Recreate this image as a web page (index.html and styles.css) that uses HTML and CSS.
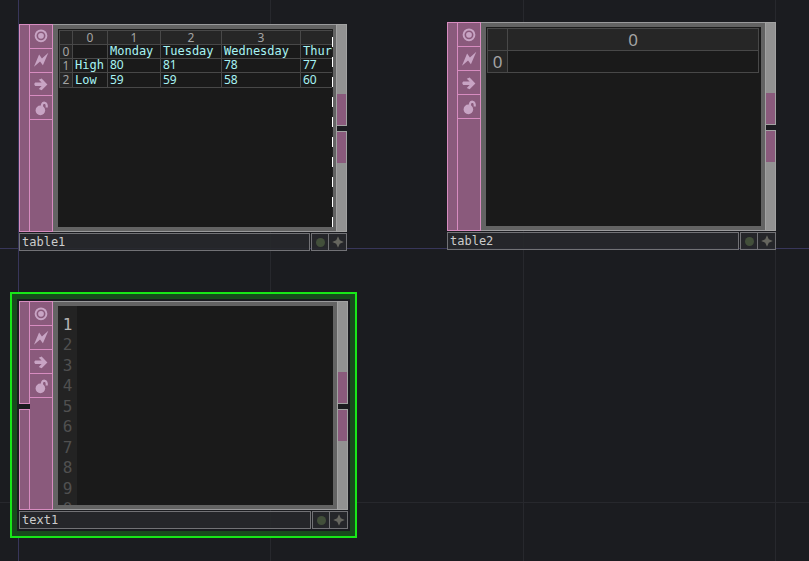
FILE: index.html
```html
<!DOCTYPE html>
<html lang="en">
<head>
<meta charset="utf-8">
<title>Network editor</title>
<link rel="stylesheet" href="styles.css">
</head>
<body>
<svg class="symbols" aria-hidden="true">
  <symbol id="viewer" viewBox="0 0 66 69"><circle cx="33" cy="34" r="17" fill="none" stroke="currentColor" stroke-width="6"/><circle cx="33" cy="34" r="9" fill="currentColor"/></symbol>
  <symbol id="bypass" viewBox="0 0 66 69"><path fill="currentColor" d="M11 56 27 17 36 30 56 12 39 51 30 39Z"/></symbol>
  <symbol id="export" viewBox="0 0 66 69"><path fill="currentColor" d="M15 30H35L26 21 35 17 53 36 35 54 26 50 35 41H15Q9 35 15 30Z"/></symbol>
  <symbol id="lock" viewBox="0 0 66 69"><circle cx="31" cy="42" r="15" fill="currentColor"/><path fill="none" stroke="currentColor" stroke-width="7" d="M36 32V25Q38 18 44 18Q52 19 51 33"/></symbol>
  <symbol id="plus" viewBox="0 0 18 18"><path fill="currentColor" d="M9 2.5 11 7 15.500 9 11 11 9 15.500 7 11 2.500 9 7 7Z"/></symbol>
</svg>
<main class="canvas">
  <section class="node node-table1" aria-label="table1">
    <div class="body">
      <div class="input-rail"><span class="plug"></span></div>
      <div class="flags">
        <button aria-label="Viewer"><svg><use href="#viewer"/></svg></button>
        <button aria-label="Bypass"><svg><use href="#bypass"/></svg></button>
        <button aria-label="Export"><svg><use href="#export"/></svg></button>
        <button aria-label="Lock"><svg><use href="#lock"/></svg></button>
      </div>
      <div class="view clipped">
        <table class="sheet">
          <colgroup><col class="c-index"><col class="c-0"><col class="c-1"><col class="c-2"><col class="c-3"><col class="c-4"></colgroup>
          <thead><tr><th></th><th>0</th><th>1</th><th>2</th><th>3</th><th></th></tr></thead>
          <tbody>
            <tr><th>0</th><td></td><td>Monday</td><td>Tuesday</td><td>Wednesday</td><td>Thur</td></tr>
            <tr><th>1</th><td>High</td><td class="num">80</td><td class="num">81</td><td class="num">78</td><td class="num">77</td></tr>
            <tr><th>2</th><td>Low</td><td class="num">59</td><td class="num">59</td><td class="num">58</td><td class="num">60</td></tr>
          </tbody>
        </table>
      </div>
      <div class="output-rail"><span class="plug"></span><span class="plug"></span></div>
    </div>
    <div class="footer"><input aria-label="Name" value="table1"><button aria-label="Active"><span class="dot"></span></button><button aria-label="Add"><svg><use href="#plus"/></svg></button></div>
  </section>

  <section class="node node-table2" aria-label="table2">
    <div class="body">
      <div class="input-rail"><span class="plug"></span></div>
      <div class="flags">
        <button aria-label="Viewer"><svg><use href="#viewer"/></svg></button>
        <button aria-label="Bypass"><svg><use href="#bypass"/></svg></button>
        <button aria-label="Export"><svg><use href="#export"/></svg></button>
        <button aria-label="Lock"><svg><use href="#lock"/></svg></button>
      </div>
      <div class="view">
        <table class="sheet large">
          <colgroup><col class="c-index"><col></colgroup>
          <thead><tr><th></th><th>0</th></tr></thead>
          <tbody><tr><th>0</th><td></td></tr></tbody>
        </table>
      </div>
      <div class="output-rail"><span class="plug"></span><span class="plug"></span></div>
    </div>
    <div class="footer"><input aria-label="Name" value="table2"><button aria-label="Active"><span class="dot"></span></button><button aria-label="Add"><svg><use href="#plus"/></svg></button></div>
  </section>

  <section class="node node-text1 selected" aria-label="text1">
    <div class="body">
      <div class="input-rail"><span class="plug"></span><span class="plug"></span></div>
      <div class="flags">
        <button aria-label="Viewer"><svg><use href="#viewer"/></svg></button>
        <button aria-label="Bypass"><svg><use href="#bypass"/></svg></button>
        <button aria-label="Export"><svg><use href="#export"/></svg></button>
        <button aria-label="Lock"><svg><use href="#lock"/></svg></button>
      </div>
      <div class="view">
        <ol class="gutter"><li class="current">1</li><li>2</li><li>3</li><li>4</li><li>5</li><li>6</li><li>7</li><li>8</li><li>9</li><li>0</li></ol>
      </div>
      <div class="output-rail"><span class="plug"></span><span class="plug"></span></div>
    </div>
    <div class="footer"><input aria-label="Name" value="text1"><button aria-label="Active"><span class="dot"></span></button><button aria-label="Add"><svg><use href="#plus"/></svg></button></div>
  </section>
</main>
</body>
</html>
```

FILE: styles.css
```css
:root {
  --page: #1b1c20;
  --well: #1a1a1a;
  --frame: #636363;
  --edge: #9a9a9c;
  --rail: #929292;
  --family: #8a5a7c;
  --family-edge: #d78cc0;
  --family-icon: #c8a4c4;
  --axis: #38365a;
  --grid: #27282d;
}

* { box-sizing: border-box; }

body {
  margin: 0;
  background: var(--page);
  font-family: "DejaVu Sans Mono", monospace;
}

.symbols { display: none; }

.canvas {
  position: relative;
  min-height: 100vh;
  overflow: hidden;
  background:
    linear-gradient(var(--axis), var(--axis)) 18px 0 / 1px 100% no-repeat,
    linear-gradient(var(--axis), var(--axis)) 0 248px / 100% 1px no-repeat,
    linear-gradient(var(--grid), var(--grid)) 270px 0 / 1px 100% no-repeat,
    linear-gradient(var(--grid), var(--grid)) 523px 0 / 1px 100% no-repeat,
    linear-gradient(var(--grid), var(--grid)) 775px 0 / 1px 100% no-repeat,
    linear-gradient(var(--grid), var(--grid)) 0 502px / 100% 1px no-repeat;
}

.node {
  position: absolute;
  width: 329px;
  display: flex;
  flex-direction: column;
  gap: 1px;
}

.node-table1 { left: 19px; top: 24px; width: 328px; }
.node-table2 { left: 447px; top: 22px; }
.node-text1 { left: 19px; top: 301px; }

.selected {
  box-shadow: 0 0 0 2px #1a1b20, 0 0 0 7px #174c1c, 0 0 0 9px #18e818;
}

.body {
  display: flex;
  height: 209px;
  background: var(--frame);
  border: solid var(--edge);
  border-width: 1px 0;
}

.node-table1 .body { height: 208px; }

.input-rail,
.output-rail {
  display: flex;
  flex-direction: column;
  gap: 5px;
  width: 11px;
  background: var(--page);
}

.input-rail, .flags, .output-rail { margin: -1px 0; }

.output-rail { border-left: 1px solid #a2a2a2; }

.plug { flex: 1; }
.plug + .plug { flex: 0 0 101px; }

.input-rail .plug {
  background: var(--family);
  border: 1px solid var(--family-edge);
}

.output-rail .plug {
  border: 1px solid #a2a2a2;
  border-left: 0;
  background: linear-gradient(to top, var(--family) 31px, var(--rail) 31px);
}

.output-rail .plug + .plug {
  background: linear-gradient(var(--family) 31px, var(--rail) 31px);
}

.flags {
  display: grid;
  grid-template-rows: repeat(4, 1fr) 111px;
  width: 23px;
  background: var(--family);
  border: solid var(--family-edge);
  border-width: 1px 1px 1px 0;
}

.flags button {
  display: block;
  padding: 0;
  border: 0;
  border-bottom: 1px solid var(--family-edge);
  background: none;
  color: var(--family-icon);
  min-height: 0;
}

.flags svg { display: block; width: 22px; height: 22px; }

.view {
  flex: 1;
  min-width: 0;
  overflow: hidden;
  position: relative;
  background: var(--well);
  border: solid var(--frame);
  border-width: 4px 4px 4px 5px;
}

.clipped { border-right-width: 3px; }

.clipped::after {
  content: "";
  position: absolute;
  inset: 0 0 0 auto;
  width: 1px;
  background: repeating-linear-gradient(to top, #fff 0 10px, #222 10px 20px);
}

.sheet {
  table-layout: fixed;
  border-collapse: collapse;
  width: calc(100% - 1px);
  margin: 1px;
  font-size: 12px;
  line-height: 12px;
  color: #a8f4f4;
}

.sheet th,
.sheet td {
  height: 14px;
  padding: 0 2px;
  border: 1px solid #484848;
  text-align: left;
  white-space: nowrap;
}

.sheet td { padding-bottom: 1px; }
.sheet tbody tr:last-child > * { height: 15px; }

.sheet th {
  padding: 0;
  background: #262626;
  color: #a4a4a4;
  font: 12px/12px "Noto Sans", sans-serif;
  text-align: center;
}

.sheet .num { font: 12px/12px "Noto Sans", sans-serif; }

.c-index { width: 13px; }
.c-0 { width: 35px; }
.c-1 { width: 53px; }
.c-2 { width: 61px; }
.c-3 { width: 79px; }

.large { width: calc(100% - 3px); }
.large .c-index { width: 20px; }
.large th,
.large td,
.large tbody tr:last-child > * { height: 22px; font-size: 17px; line-height: 20px; }

.gutter {
  width: 19px;
  height: 100%;
  margin: 0;
  padding: 9px 0 0;
  overflow: hidden;
  list-style: none;
  background: #232323;
  color: #505050;
  display: grid;
  grid-template-rows: repeat(9, minmax(20px, 1fr)) 6px;
  font: 16px/20px "DejaVu Sans Mono", monospace;
  text-align: center;
}

.gutter .current { color: #b4b4b4; }

.footer { display: flex; height: 18px; }

.footer input,
.footer button {
  margin: 0;
  border: 1px solid #727276;
  border-radius: 0;
  background: rgba(39, 40, 43, 0.9);
}

.footer input {
  flex: 1;
  min-width: 0;
  margin-right: 1px;
  padding: 0 2px;
  color: #cccccc;
  font: 12px/16px "DejaVu Sans Mono", monospace;
}

.footer button {
  display: grid;
  place-items: center;
  width: 18px;
  padding: 0;
  color: #66665f;
}

.footer button + button { border-left: 0; }
.footer svg { width: 16px; height: 16px; }
.dot { width: 9px; height: 9px; border-radius: 50%; background: #424f3a; }
```
